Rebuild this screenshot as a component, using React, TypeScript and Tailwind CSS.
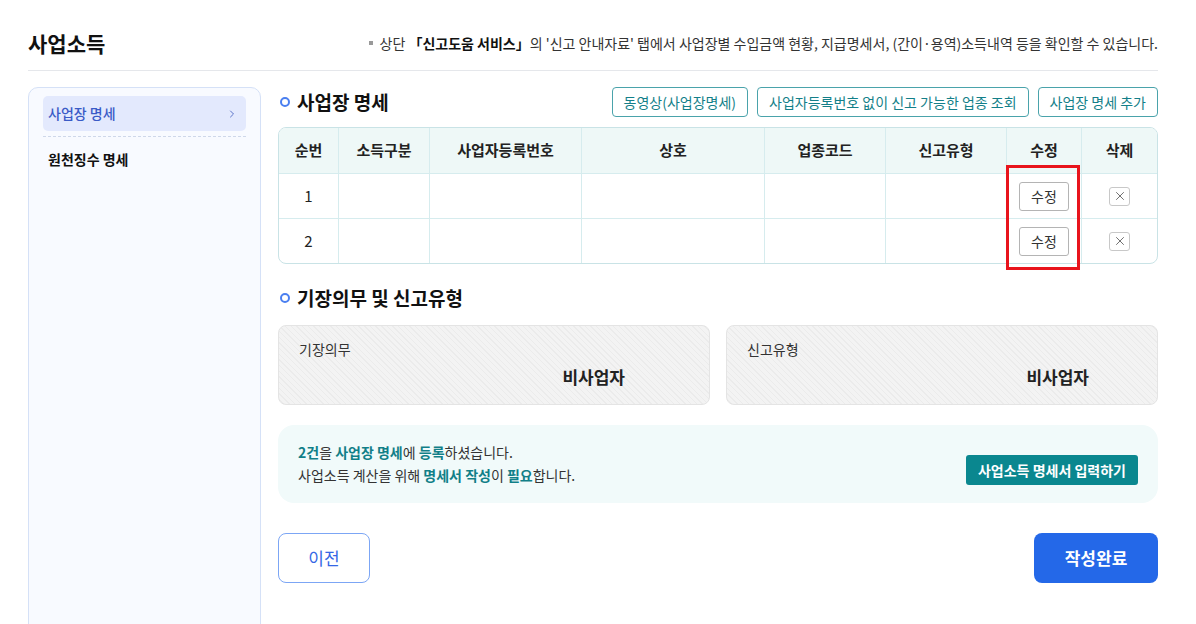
import { ChevronRight, X } from 'lucide-react'

const cols = [
  { label: '순번', w: 'w-[60px]' },
  { label: '소득구분', w: 'w-[91px]' },
  { label: '사업자등록번호', w: 'w-[152px]' },
  { label: '상호', w: 'w-[183px]' },
  { label: '업종코드', w: 'w-[121px]' },
  { label: '신고유형', w: 'w-[121px]' },
  { label: '수정', w: 'w-[75px]' },
  { label: '삭제', w: 'flex-1' },
]

function SectionTitle({ children }: { children: React.ReactNode }) {
  return (
    <div className="flex items-center gap-[7px]">
      <span className="ml-[2px] w-[10px] h-[10px] rounded-full border-[2.5px] border-[#4a7ff0]" />
      <h2 className="text-[19px] font-bold text-[#111] leading-[26px]">{children}</h2>
    </div>
  )
}

function OutlineButton({ children }: { children: React.ReactNode }) {
  return (
    <button className="h-[30px] px-[11px] border border-[#4aa3ab] rounded-[4px] text-[14px] text-[#137f89] bg-white">
      {children}
    </button>
  )
}

function Row({ no }: { no: number }) {
  return (
    <div className="flex h-[45px] border-t border-[#d6ecee] text-[15px] text-[#222]">
      {cols.map((c, i) => (
        <div
          key={c.label}
          className={`${c.w} flex items-center justify-center ${i < cols.length - 1 ? 'border-r border-[#d6ecee]' : ''}`}
        >
          {i === 0 && no}
          {i === 6 && (
            <button className="w-[50px] h-[29px] border border-[#b4b4b4] rounded-[3px] text-[14px] text-[#333] bg-white">
              수정
            </button>
          )}
          {i === 7 && (
            <button className="w-[21px] h-[19px] border border-[#c8c8c8] rounded-[3px] bg-white flex items-center justify-center">
              <X size={14} strokeWidth={1.3} color="#444" />
            </button>
          )}
        </div>
      ))}
    </div>
  )
}

function InfoCard({ label, value, pr }: { label: string; value: string; pr: string }) {
  return (
    <div className="flex-1 h-[80px] rounded-[8px] border border-[#e4e4e4] bg-[repeating-linear-gradient(45deg,#f3f3f3_0px,#f3f3f3_3px,#ebebeb_3px,#ebebeb_4px)] pl-[20px] pt-[13px]">
      <div className="text-[14px] text-[#333] leading-[20px]">{label}</div>
      <div className={`flex justify-end ${pr} mt-[6px] text-[17px] font-semibold text-[#222] leading-[24px]`}>{value}</div>
    </div>
  )
}

export default function App() {
  return (
    <div className="w-[1196px] min-h-[624px] bg-white pl-[28px] pr-[38px] font-['Noto_Sans_CJK_KR','Noto_Sans',sans-serif]">
      <div className="flex items-center justify-between pt-[28px] pb-[12px] border-b border-[#e5e7eb]">
        <h1 className="text-[21px] font-bold text-[#111] leading-[30px]">사업소득</h1>
        <p className="flex items-center gap-[7px] text-[14px] text-[#333]">
          <span className="w-[4px] h-[4px] bg-[#999]" />
          <span>
            상단 <b className="text-[#111]">「신고도움 서비스」</b>의 '신고 안내자료' 탭에서 사업장별 수입금액 현황, 지급명세서,
            (간이·용역)소득내역 등을 확인할 수 있습니다.
          </span>
        </p>
      </div>

      <div className="flex gap-[17px] mt-[16px]">
        <aside className="w-[233px] shrink-0 rounded-t-[10px] border border-[#d5e1f7] bg-[#f8faff] px-[14px] pt-[8px]">
          <div className="h-[35px] rounded-[5px] bg-[#e3e9fd] flex items-center justify-between pl-[5px] pr-[8px]">
            <span className="text-[14px] font-medium text-[#3a5bc7]">사업장 명세</span>
            <ChevronRight size={12} strokeWidth={2} color="#5b74c9" />
          </div>
          <div className="mt-[5px] border-t border-dashed border-[#cfd8ea]" />
          <div className="py-[10px] pl-[5px] text-[14px] font-semibold text-[#111] leading-[24px]">원천징수 명세</div>
        </aside>

        <main className="flex-1 pb-[60px]">
          <div className="flex items-center justify-between">
            <SectionTitle>사업장 명세</SectionTitle>
            <div className="flex gap-[9px]">
              <OutlineButton>동영상(사업장명세)</OutlineButton>
              <OutlineButton>사업자등록번호 없이 신고 가능한 업종 조회</OutlineButton>
              <OutlineButton>사업장 명세 추가</OutlineButton>
            </div>
          </div>

          <div className="relative mt-[10px]">
            <div className="rounded-[8px] border border-[#c9e3e6] overflow-hidden">
              <div className="flex h-[45px] bg-[#eef8f7] text-[15px] font-semibold text-[#222]">
                {cols.map((c, i) => (
                  <div
                    key={c.label}
                    className={`${c.w} flex items-center justify-center ${i < cols.length - 1 ? 'border-r border-[#d6ecee]' : ''}`}
                  >
                    {c.label}
                  </div>
                ))}
              </div>
              <Row no={1} />
              <Row no={2} />
            </div>
            <div className="absolute left-[728px] top-[38px] w-[74px] h-[105px] border-[3px] border-[#e8141c]" />
          </div>

          <div className="mt-[21px]">
            <SectionTitle>기장의무 및 신고유형</SectionTitle>
          </div>

          <div className="flex gap-[16px] mt-[14px]">
            <InfoCard label="기장의무" value="비사업자" pr="pr-[84px]" />
            <InfoCard label="신고유형" value="비사업자" pr="pr-[68px]" />
          </div>

          <div className="mt-[20px] h-[78px] rounded-[16px] bg-[#f1fafa] flex items-center justify-between pl-[20px] pr-[20px]">
            <div className="text-[14px] text-[#333] leading-[23px]">
              <p>
                <b className="text-[#117f88]">2건</b>을 <b className="text-[#117f88]">사업장 명세</b>에{' '}
                <b className="text-[#117f88]">등록</b>하셨습니다.
              </p>
              <p>
                사업소득 계산을 위해 <b className="text-[#117f88]">명세서 작성</b>이{' '}
                <b className="text-[#117f88]">필요</b>합니다.
              </p>
            </div>
            <button className="mt-[12px] h-[30px] px-[12px] rounded-[3px] bg-[#0a878f] text-white text-[14px] font-bold">
              사업소득 명세서 입력하기
            </button>
          </div>

          <div className="flex justify-between mt-[30px]">
            <button className="w-[92px] h-[50px] rounded-[8px] border border-[#7ca6f5] bg-white text-[17px] text-[#3567e5]">
              이전
            </button>
            <button className="w-[124px] h-[50px] rounded-[8px] bg-[#2468e8] text-white text-[17px] font-bold">
              작성완료
            </button>
          </div>
        </main>
      </div>
    </div>
  )
}
